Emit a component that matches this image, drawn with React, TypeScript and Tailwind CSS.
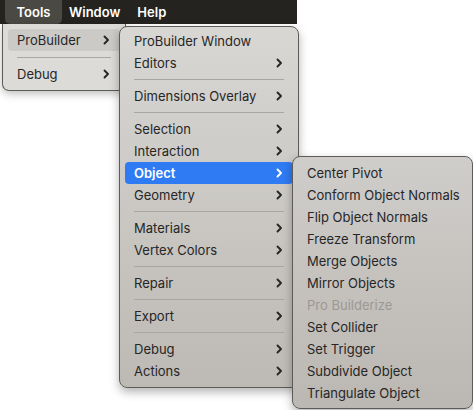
import React from "react";

type Item =
  | { kind: "item"; label: string; sub?: boolean; active?: boolean; disabled?: boolean; hover?: boolean }
  | { kind: "sep" };

const Chevron = ({ className = "" }: { className?: string }) => (
  <svg width="7" height="10" viewBox="0 0 7 10" className={className}>
    <polyline points="1.5,1.5 5,5 1.5,8.5" fill="none" stroke="currentColor" strokeWidth="1.9" strokeLinecap="round" strokeLinejoin="round" />
  </svg>
);

const toolsMenu: Item[] = [
  { kind: "item", label: "ProBuilder", sub: true, hover: true },
  { kind: "sep" },
  { kind: "item", label: "Debug", sub: true },
];

const probuilderMenu: Item[] = [
  { kind: "item", label: "ProBuilder Window" },
  { kind: "item", label: "Editors", sub: true },
  { kind: "sep" },
  { kind: "item", label: "Dimensions Overlay", sub: true },
  { kind: "sep" },
  { kind: "item", label: "Selection", sub: true },
  { kind: "item", label: "Interaction", sub: true },
  { kind: "item", label: "Object", sub: true, active: true },
  { kind: "item", label: "Geometry", sub: true },
  { kind: "sep" },
  { kind: "item", label: "Materials", sub: true },
  { kind: "item", label: "Vertex Colors", sub: true },
  { kind: "sep" },
  { kind: "item", label: "Repair", sub: true },
  { kind: "sep" },
  { kind: "item", label: "Export", sub: true },
  { kind: "sep" },
  { kind: "item", label: "Debug", sub: true },
  { kind: "item", label: "Actions", sub: true },
];

const objectMenu: Item[] = [
  { kind: "item", label: "Center Pivot" },
  { kind: "item", label: "Conform Object Normals" },
  { kind: "item", label: "Flip Object Normals" },
  { kind: "item", label: "Freeze Transform" },
  { kind: "item", label: "Merge Objects" },
  { kind: "item", label: "Mirror Objects" },
  { kind: "item", label: "Pro Builderize", disabled: true },
  { kind: "item", label: "Set Collider" },
  { kind: "item", label: "Set Trigger" },
  { kind: "item", label: "Subdivide Object" },
  { kind: "item", label: "Triangulate Object" },
];

const MenuRows = ({ items, sepH = "h-3" }: { items: Item[]; sepH?: string }) => (
  <>
    {items.map((it, i) =>
      it.kind === "sep" ? (
        <div key={i} className={`${sepH} flex items-center px-[9px]`}>
          <div className="h-px w-full bg-[#a9a6a2]" />
        </div>
      ) : (
        <div
          key={i}
          className={`h-[22px] flex items-center justify-between whitespace-nowrap rounded-[4px] pl-[9px] pr-[10px] ${
            it.active
              ? "bg-[#2f7bf3] text-white font-semibold"
              : it.hover
              ? "bg-[#cbcac7] text-[#262626]"
              : it.disabled
              ? "text-[#9b9894]"
              : "text-[#262626]"
          }`}
        >
          <span>{it.label}</span>
          {it.sub && <Chevron />}
        </div>
      )
    )}
  </>
);

export default function App() {
  return (
    <div
      className="relative w-[473px] h-[410px] bg-white overflow-hidden text-[13px] leading-none"
      style={{ fontFamily: "Inter, 'Noto Sans', sans-serif" }}
    >
      <div className="h-6 w-[297px] bg-[#24231f] flex items-center text-white font-semibold pl-[5px]">
        <div className="h-6 w-[57px] bg-[#4b4944] rounded-b-[5px] flex items-center justify-center">Tools</div>
        <div className="ml-[7px]">Window</div>
        <div className="ml-[17px]">Help</div>
      </div>

      <div className="absolute left-[2px] top-6 w-[124px] h-[67px] rounded-b-[7px] border border-t-0 border-[#5d5b58] bg-[#dcdbd8] px-[5px] pt-[5px] shadow-[0_3px_8px_rgba(0,0,0,0.25)]">
        <MenuRows items={toolsMenu} />
      </div>

      <div className="absolute left-[119px] top-[26px] w-[180px] h-[362px] rounded-[8px] border border-[#5d5b58] bg-gradient-to-b from-[#d8d7d4] to-[#bdb9b4] px-[5px] pt-[3px] shadow-[0_4px_10px_rgba(0,0,0,0.3)]">
        <MenuRows items={probuilderMenu} sepH="h-[11px]" />
      </div>

      <div className="absolute left-[292px] top-[156px] w-[181px] h-[253px] rounded-[8px] border border-[#5d5b58] bg-gradient-to-b from-[#cfcdca] to-[#bbb7b2] px-[5px] pt-[5px] shadow-[0_4px_10px_rgba(0,0,0,0.3)]">
        <MenuRows items={objectMenu} />
      </div>
    </div>
  );
}
